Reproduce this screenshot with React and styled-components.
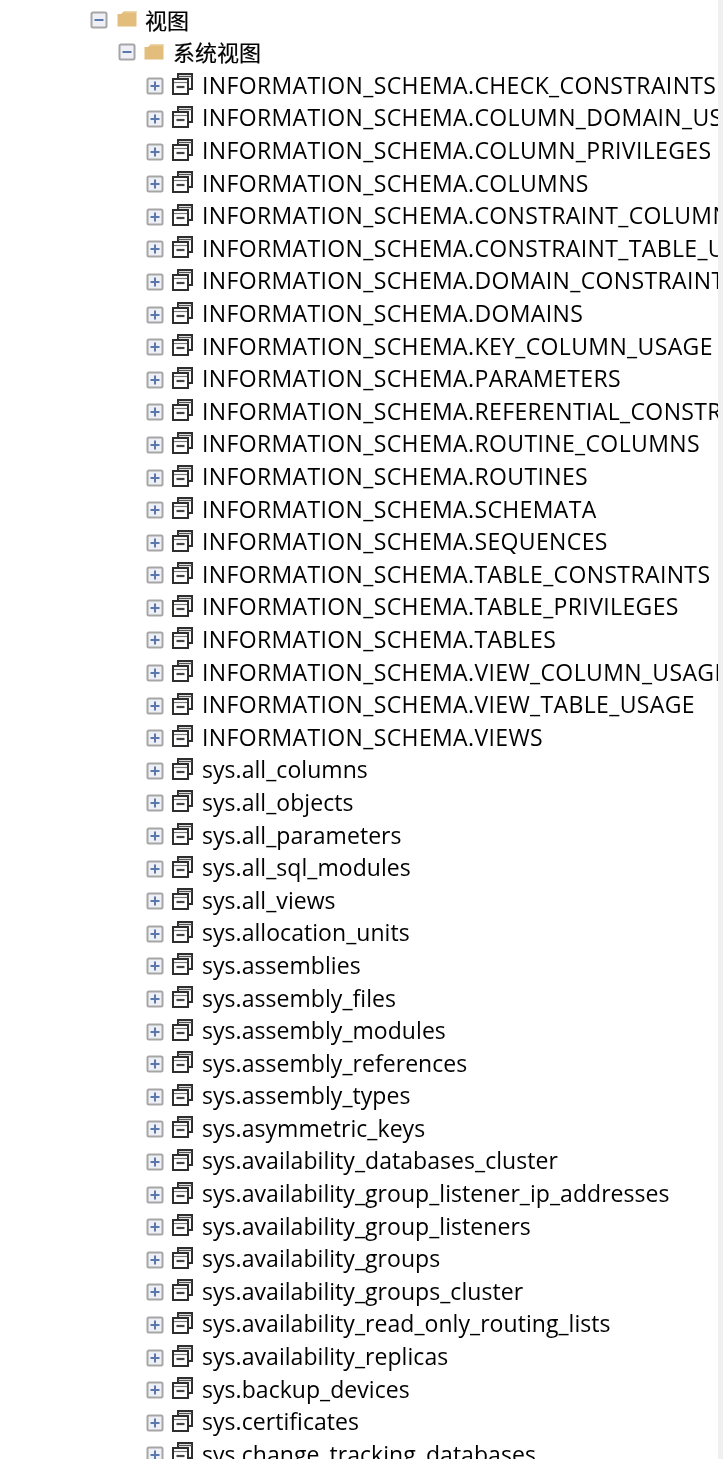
import React from 'react'
import styled, { createGlobalStyle } from 'styled-components'

const GlobalStyle = createGlobalStyle`
  html, body {
    margin: 0;
    padding: 0;
    background: #fff;
  }
`
const Page = styled.div`
  display: flex;
  width: 723px;
  height: 1459px;
  overflow: hidden;
  font-family: 'Open Sans', 'Noto Sans CJK SC', sans-serif;
  font-size: 23px;
  color: #000;
`
const Tree = styled.div`
  flex: 1;
  min-width: 0;
  overflow: hidden;
  padding-top: 3.4px;
  filter: blur(0.35px);
`
const ScrollStrip = styled.div`
  width: 5px;
  background: #f0f0f0;
`
const Row = styled.div`
  display: flex;
  align-items: center;
  height: 32.6px;
  padding-left: ${props => props.indent}px;
  white-space: nowrap;
`
const Expander = styled.svg`
  flex: none;
  width: 18px;
  height: 18px;
  margin-right: ${props => props.gap}px;
  margin-top: ${props => props.drop || 0}px;
`
const FolderIcon = styled.svg`
  flex: none;
  width: 20px;
  height: 17px;
  margin-right: ${props => props.gap}px;
  margin-top: -2px;
`
const ViewIcon = styled.svg`
  flex: none;
  width: 21px;
  height: 22px;
  margin-right: 9px;
  margin-top: -1px;
`
const Label = styled.span`
  line-height: 32px;
  letter-spacing: ${props => props.spacing || 0}px;
`
const FolderLabel = styled.span`
  font-size: 22px;
  line-height: 32px;
  -webkit-text-stroke: 0.2px #000;
`

const infoViews = [
  'CHECK_CONSTRAINTS', 'COLUMN_DOMAIN_USAGE', 'COLUMN_PRIVILEGES', 'COLUMNS',
  'CONSTRAINT_COLUMN_USAGE', 'CONSTRAINT_TABLE_USAGE', 'DOMAIN_CONSTRAINTS', 'DOMAINS',
  'KEY_COLUMN_USAGE', 'PARAMETERS', 'REFERENTIAL_CONSTRAINTS', 'ROUTINE_COLUMNS',
  'ROUTINES', 'SCHEMATA', 'SEQUENCES', 'TABLE_CONSTRAINTS', 'TABLE_PRIVILEGES', 'TABLES',
  'VIEW_COLUMN_USAGE', 'VIEW_TABLE_USAGE', 'VIEWS',
].map(name => `INFORMATION_SCHEMA.${name}`)

const sysViews = [
  'all_columns', 'all_objects', 'all_parameters', 'all_sql_modules', 'all_views',
  'allocation_units', 'assemblies', 'assembly_files', 'assembly_modules',
  'assembly_references', 'assembly_types', 'asymmetric_keys',
  'availability_databases_cluster', 'availability_group_listener_ip_addresses',
  'availability_group_listeners', 'availability_groups', 'availability_groups_cluster',
  'availability_read_only_routing_lists', 'availability_replicas', 'backup_devices',
  'certificates', 'change_tracking_databases',
].map(name => `sys.${name}`)

const Toggle = ({ open, gap, drop }) => (
  <Expander viewBox="0 0 18 18" gap={gap} drop={drop}>
    <rect x="1.5" y="1.5" width="15" height="15" rx="1.5" fill="#eff0f5" stroke="#a6a6a6" strokeWidth="2" />
    <path d="M4.5 9h9" stroke="#5b78ac" strokeWidth="2" />
    {!open && <path d="M9 4.5v9" stroke="#5b78ac" strokeWidth="2" />}
  </Expander>
)

const Folder = ({ gap }) => (
  <FolderIcon viewBox="0 0 20 17" gap={gap}>
    <path d="M0.5 4 L0.5 16.5 L19.5 16.5 L19.5 1 L7 1 L4 4 Z" fill="#e2bd7c" />
    <path d="M7 1 L19.5 1 L19.5 2.5 L6 2.5 Z" fill="#efd6a8" />
  </FolderIcon>
)

const View = () => (
  <ViewIcon viewBox="0 0 21 22">
    <rect x="6" y="1" width="14" height="15" fill="none" stroke="#2e2e2e" strokeWidth="2" />
    <path d="M6 3.5h14" stroke="#555" strokeWidth="1.4" />
    <rect x="1" y="6" width="15" height="15" fill="#fff" stroke="#2e2e2e" strokeWidth="2" />
    <path d="M2 9.5h13" stroke="#777" strokeWidth="1.2" />
    <path d="M4.5 14h8" stroke="#444" strokeWidth="2.2" />
  </ViewIcon>
)

const App = () => (
  <Page>
    <GlobalStyle />
    <Tree>
      <Row indent={90}>
        <Toggle open gap={9} drop={1} />
        <Folder gap={8} />
        <FolderLabel>视图</FolderLabel>
      </Row>
      <Row indent={118}>
        <Toggle open gap={8} />
        <Folder gap={9} />
        <FolderLabel>系统视图</FolderLabel>
      </Row>
      {infoViews.map(name => (
        <Row indent={146} key={name}>
          <Toggle gap={8} drop={3} />
          <View />
          <Label spacing={0.37}>{name}</Label>
        </Row>
      ))}
      {sysViews.map(name => (
        <Row indent={146} key={name}>
          <Toggle gap={8} drop={3} />
          <View />
          <Label spacing={0.05}>{name}</Label>
        </Row>
      ))}
    </Tree>
    <ScrollStrip />
  </Page>
)

export default App
